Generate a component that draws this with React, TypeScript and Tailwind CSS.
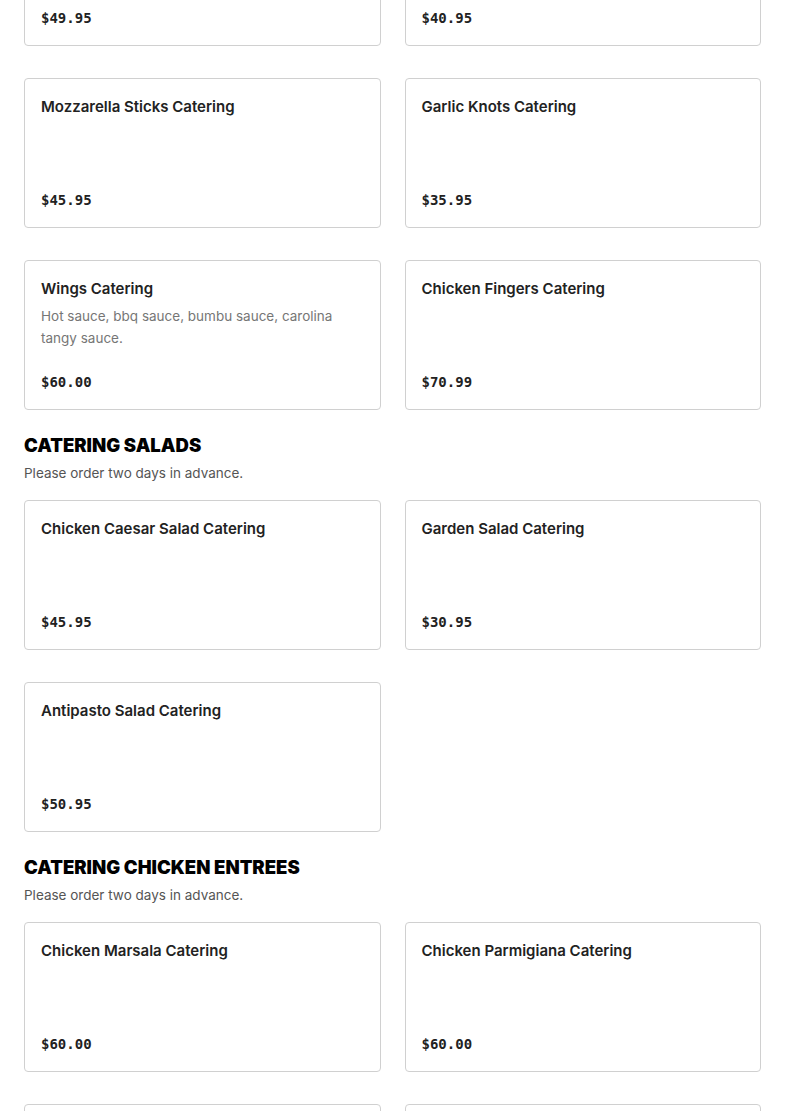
type Item = { name: string; price: string; description?: string };

type Section = { title?: string; note?: string; items: Item[] };

const sections: Section[] = [
  {
    items: [
      { name: 'Fried Calamari Catering', price: '$49.95' },
      { name: 'Zucchini Sticks Catering', price: '$40.95' },
      { name: 'Mozzarella Sticks Catering', price: '$45.95' },
      { name: 'Garlic Knots Catering', price: '$35.95' },
      {
        name: 'Wings Catering',
        price: '$60.00',
        description: 'Hot sauce, bbq sauce, bumbu sauce, carolina tangy sauce.',
      },
      { name: 'Chicken Fingers Catering', price: '$70.99' },
    ],
  },
  {
    title: 'Catering Salads',
    note: 'Please order two days in advance.',
    items: [
      { name: 'Chicken Caesar Salad Catering', price: '$45.95' },
      { name: 'Garden Salad Catering', price: '$30.95' },
      { name: 'Antipasto Salad Catering', price: '$50.95' },
    ],
  },
  {
    title: 'Catering Chicken Entrees',
    note: 'Please order two days in advance.',
    items: [
      { name: 'Chicken Marsala Catering', price: '$60.00' },
      { name: 'Chicken Parmigiana Catering', price: '$60.00' },
      { name: 'Chicken Francese Catering', price: '$60.00' },
      { name: 'Chicken Piccata Catering', price: '$60.00' },
    ],
  },
];

function MenuCard({ item }: { item: Item }) {
  return (
    <div className="flex h-[150px] flex-col rounded-[4px] border border-[#d0d0d0] bg-white p-4">
      <h3 className="font-['Inter',sans-serif] text-[15px] font-semibold leading-[24px] text-[#222]">
        {item.name}
      </h3>
      {item.description && (
        <p className="mt-[4px] pr-4 font-['Inter',sans-serif] text-[13.5px] leading-[22px] text-[#767676]">
          {item.description}
        </p>
      )}
      <div className="mt-auto font-['DejaVu_Sans_Mono',monospace] text-[14px] font-bold leading-[22px] text-[#222]">
        {item.price}
      </div>
    </div>
  );
}

export default function App() {
  return (
    <div className="min-h-screen overflow-hidden bg-white">
      <div className="-mt-[104px] px-6">
        {sections.map((section, i) => (
          <section key={i} className={i > 0 ? 'mt-[22px]' : ''}>
            {section.title && (
              <>
                <h2 className="font-['Inter',sans-serif] text-[18.5px] font-black uppercase leading-[27px] text-black">
                  {section.title}
                </h2>
                <p className="mt-[3px] font-['Inter',sans-serif] text-[13.5px] leading-[22px] text-[#555]">
                  {section.note}
                </p>
              </>
            )}
            <div className={`grid grid-cols-2 gap-x-6 gap-y-8 ${section.title ? 'mt-[16px]' : ''}`}>
              {section.items.map((item) => (
                <MenuCard key={item.name} item={item} />
              ))}
            </div>
          </section>
        ))}
      </div>
    </div>
  );
}
